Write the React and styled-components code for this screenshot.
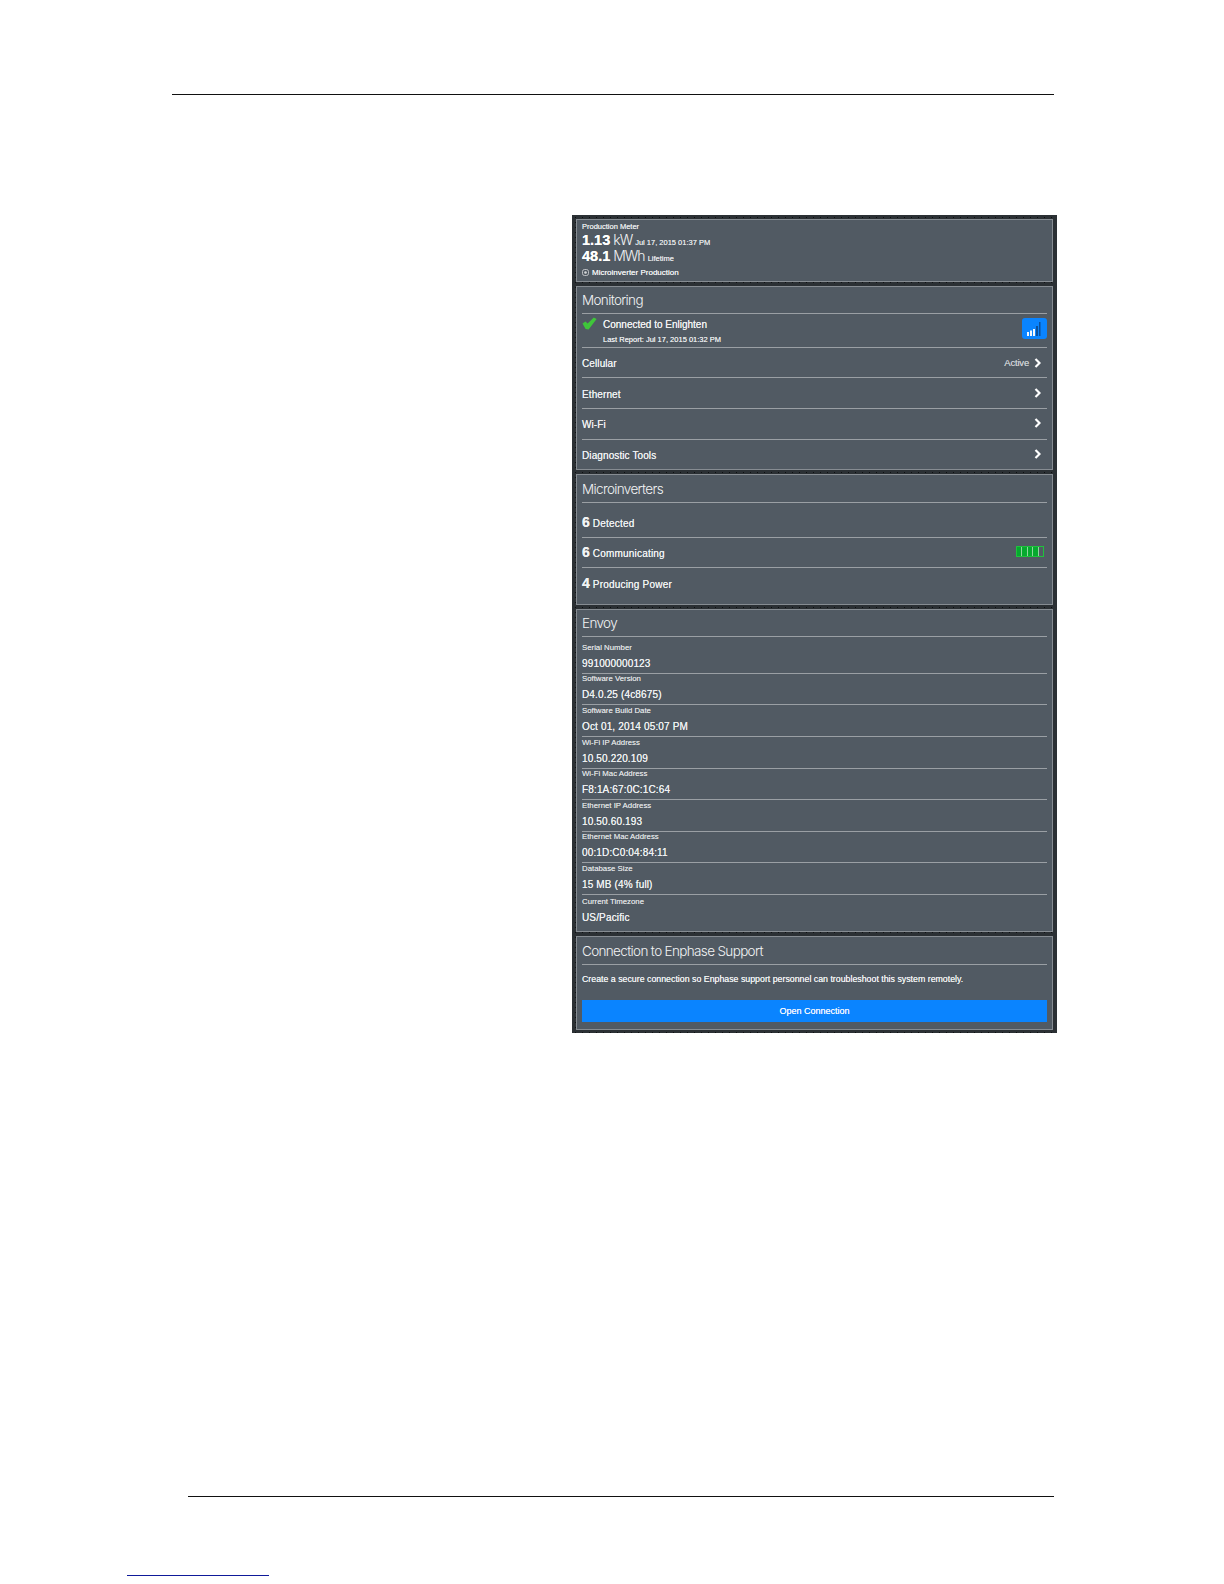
import React from 'react';
import styled, { createGlobalStyle } from 'styled-components';

const GlobalStyle = createGlobalStyle`
  html, body {
    margin: 0;
    padding: 0;
    background: #fff;
  }
  body {
    font-family: "Liberation Sans", Arial, sans-serif;
    text-shadow: 0 0 0.4px currentColor;
  }
`;

const envoyFields = [
  { label: 'Serial Number', value: '991000000123', height: 37 },
  { label: 'Software Version', value: 'D4.0.25 (4c8675)', height: 31 },
  { label: 'Software Build Date', value: 'Oct 01, 2014 05:07 PM', height: 32 },
  { label: 'Wi-Fi IP Address', value: '10.50.220.109', height: 32 },
  { label: 'Wi-Fi Mac Address', value: 'F8:1A:67:0C:1C:64', height: 31 },
  { label: 'Ethernet IP Address', value: '10.50.60.193', height: 32 },
  { label: 'Ethernet Mac Address', value: '00:1D:C0:04:84:11', height: 31 },
  { label: 'Database Size', value: '15 MB (4% full)', height: 32 },
  { label: 'Current Timezone', value: 'US/Pacific', height: 32, last: true },
];

const Chevron = () => (
  <svg width="7" height="10" viewBox="0 0 7 10">
    <path d="M1.5 1 L5.5 5 L1.5 9" fill="none" stroke="#fff" strokeWidth="2.2" />
  </svg>
);

const Home = () => (
  <Page>
    <GlobalStyle />
    <TopRule />
    <Screen>
      <Card $height={63}>
        <MeterLabel>Production Meter</MeterLabel>
        <MeterLine>
          <MeterValue>1.13</MeterValue>
          <MeterUnit>kW</MeterUnit>
          <MeterNote>Jul 17, 2015 01:37 PM</MeterNote>
        </MeterLine>
        <MeterLine>
          <MeterValue>48.1</MeterValue>
          <MeterUnit>MWh</MeterUnit>
          <MeterNote>Lifetime</MeterNote>
        </MeterLine>
        <ExpandLine>
          <svg width="7" height="7" viewBox="0 0 7 7">
            <rect x="0.5" y="0.5" width="6" height="6" rx="2" fill="none" stroke="#d5d8da" strokeWidth="0.8" />
            <circle cx="3.5" cy="3.5" r="1.3" fill="#d5d8da" />
          </svg>
          Microinverter Production
        </ExpandLine>
      </Card>

      <Card $height={184} $top={4}>
        <CardTitle $height={27}>Monitoring</CardTitle>
        <StatusRow>
          <CheckMark width="15" height="13" viewBox="0 0 15 13">
            <path d="M0.5 6.5 L3.5 4.5 L5.6 6.6 L11.8 0.5 L14.6 2 L6.6 12.5 L3.6 12 Z" fill="#3fc63a" />
          </CheckMark>
          <StatusText>
            <StatusTitle>Connected to Enlighten</StatusTitle>
            <StatusNote>Last Report: Jul 17, 2015 01:32 PM</StatusNote>
          </StatusText>
          <SignalBadge>
            <svg width="16" height="14" viewBox="0 0 16 14">
              <rect x="0" y="10" width="2" height="4" fill="#f1f7ff" />
              <rect x="3" y="8.5" width="2" height="5.5" fill="#f1f7ff" />
              <rect x="6" y="7" width="2" height="7" fill="#f1f7ff" />
              <rect x="9" y="4" width="2" height="10" fill="#0a4f9c" />
              <rect x="12" y="0" width="1.5" height="14" fill="#0a4f9c" />
            </svg>
          </SignalBadge>
        </StatusRow>
        <NavRow $height={30} $shift={1}>
          Cellular
          <NavSide>
            <ActiveText>Active</ActiveText>
            <Chevron />
          </NavSide>
        </NavRow>
        <NavRow $height={31} $shift={1}>
          Ethernet
          <NavSide><Chevron /></NavSide>
        </NavRow>
        <NavRow $height={31}>
          Wi-Fi
          <NavSide><Chevron /></NavSide>
        </NavRow>
        <NavRow $height={30} $last>
          Diagnostic Tools
          <NavSide><Chevron /></NavSide>
        </NavRow>
      </Card>

      <Card $height={131} $top={4}>
        <CardTitle $height={28}>Microinverters</CardTitle>
        <CountRow $height={35}>
          <CountValue>6</CountValue>
          <CountLabel>Detected</CountLabel>
        </CountRow>
        <CountRow $height={30}>
          <CountValue>6</CountValue>
          <CountLabel>Communicating</CountLabel>
          <Battery>
            {[true, true, true, true, false].map((on, i) => (
              <BatteryCell key={i} $on={on} />
            ))}
          </Battery>
        </CountRow>
        <CountRow $height={30} $last>
          <CountValue>4</CountValue>
          <CountLabel>Producing Power</CountLabel>
        </CountRow>
      </Card>

      <Card $height={323} $top={4}>
        <CardTitle $height={27}>Envoy</CardTitle>
        {envoyFields.map((field) => (
          <Field key={field.label} $height={field.height} $last={field.last}>
            <FieldLabel>{field.label}</FieldLabel>
            <FieldValue>{field.value}</FieldValue>
          </Field>
        ))}
      </Card>

      <Card $height={94} $top={4}>
        <CardTitle $height={28}>Connection to Enphase Support</CardTitle>
        <SupportText>Create a secure connection so Enphase support personnel can troubleshoot this system remotely.</SupportText>
        <OpenButton>Open Connection</OpenButton>
      </Card>
    </Screen>
    <BottomRule />
    <FooterLink />
  </Page>
);

export default Home;


const Page = styled.div`
  width: 1224px;
  height: 1584px;
  overflow: hidden;
  background: #fff;
  padding-top: 94px;
  box-sizing: border-box;
`;

const TopRule = styled.div`
  height: 1px;
  margin-left: 172px;
  width: 882px;
  background: #111;
`;

const BottomRule = styled.div`
  height: 1px;
  margin: 463px 0 0 188px;
  width: 866px;
  background: #111;
`;

const FooterLink = styled.div`
  height: 1px;
  margin: 78px 0 0 127px;
  width: 142px;
  background: #0f1a9a;
`;

const Screen = styled.div`
  width: 485px;
  height: 818px;
  margin: 120px 0 0 572px;
  padding: 4px;
  box-sizing: border-box;
  background-color: #2b3034;
  background-image: radial-gradient(circle, #0e1012 0.7px, transparent 1px);
  background-size: 7px 5px;
`;

const Card = styled.div`
  height: ${({ $height }) => $height}px;
  margin-top: ${({ $top }) => $top || 0}px;
  padding: 0 5px;
  box-sizing: border-box;
  background: #515a63;
  border: 1px solid #868c92;
  color: #eef0f1;
`;

const MeterLabel = styled.div`
  font-size: 7.5px;
  line-height: 10px;
  padding-top: 2px;
  color: #e6e8ea;
`;

const MeterLine = styled.div`
  display: flex;
  align-items: baseline;
  height: 16px;
  line-height: 16px;
`;

const MeterValue = styled.span`
  font-size: 14.5px;
  font-weight: 700;
  color: #fff;
`;

const MeterUnit = styled.span`
  font-family: Inter, "Liberation Sans", sans-serif;
  font-weight: 300;
  font-size: 14px;
  margin-left: 3px;
  letter-spacing: -1px;
  text-shadow: none;
  color: #f1f3f4;
`;

const MeterNote = styled.span`
  font-size: 7.5px;
  margin-left: 3px;
  color: #e3e5e7;
`;

const ExpandLine = styled.div`
  display: flex;
  align-items: center;
  gap: 3px;
  margin-top: 3px;
  font-size: 8px;
  line-height: 11px;
  color: #eef0f1;
`;

const CardTitle = styled.div`
  height: ${({ $height }) => $height - 1}px;
  line-height: ${({ $height }) => $height}px;
  border-bottom: 1px solid #9a9fa4;
  font-family: Inter, "Liberation Sans", sans-serif;
  font-weight: 300;
  font-size: 13.5px;
  letter-spacing: -0.65px;
  text-shadow: none;
  color: #f1f3f4;
`;

const StatusRow = styled.div`
  display: flex;
  align-items: flex-start;
  height: 34px;
  padding-top: 5px;
  box-sizing: border-box;
  border-bottom: 1px solid #9a9fa4;
`;

const CheckMark = styled.svg`
  margin-top: -2px;
`;

const StatusText = styled.div`
  margin-left: 6px;
  flex: 1;
`;

const StatusTitle = styled.div`
  font-size: 10px;
  line-height: 12px;
  color: #f0f1f2;
`;

const StatusNote = styled.div`
  font-size: 7.5px;
  line-height: 10px;
  margin-top: 4px;
  color: #e8eaeb;
`;

const SignalBadge = styled.div`
  display: flex;
  align-items: flex-end;
  justify-content: center;
  width: 25px;
  height: 21px;
  margin-top: -1px;
  padding-bottom: 3px;
  box-sizing: border-box;
  background: #0a84ff;
  border-radius: 3px;
`;

const NavRow = styled.div`
  display: flex;
  align-items: center;
  justify-content: space-between;
  height: ${({ $height }) => $height}px;
  padding-top: ${({ $shift }) => ($shift ? 2 : 0)}px;
  box-sizing: border-box;
  border-bottom: ${({ $last }) => ($last ? 'none' : '1px solid #9a9fa4')};
  font-size: 10px;
  letter-spacing: 0.1px;
  color: #eef0f1;
`;

const NavSide = styled.div`
  display: flex;
  align-items: center;
  gap: 5px;
  padding-right: 6px;
  margin-top: -2px;
  color: #fff;
`;

const ActiveText = styled.span`
  font-size: 9.5px;
  letter-spacing: -0.2px;
  color: #c9cdd0;
`;

const CountRow = styled.div`
  display: flex;
  align-items: flex-end;
  height: ${({ $height }) => $height}px;
  padding-bottom: 7px;
  box-sizing: border-box;
  border-bottom: ${({ $last }) => ($last ? 'none' : '1px solid #9a9fa4')};
`;

const CountValue = styled.span`
  font-size: 14px;
  font-weight: 700;
  line-height: 16px;
  color: #f2f3f4;
`;

const CountLabel = styled.span`
  font-size: 10px;
  line-height: 13px;
  margin-left: 3px;
  letter-spacing: 0.2px;
  flex: 1;
  color: #eef0f1;
`;

const Battery = styled.div`
  display: flex;
  width: 28px;
  height: 11px;
  margin: 0 3px 3px 0;
  box-sizing: border-box;
  border: 1px solid #1fc23c;
  gap: 1px;
  background: #8fd69c;
`;

const BatteryCell = styled.div`
  flex: 1;
  background: ${({ $on }) => ($on ? '#06a92f' : '#515a63')};
`;

const Field = styled.div`
  height: ${({ $height }) => $height}px;
  box-sizing: border-box;
  border-bottom: ${({ $last }) => ($last ? 'none' : '1px solid #9a9fa4')};
  display: flex;
  flex-direction: column;
  justify-content: flex-end;
`;

const FieldLabel = styled.div`
  font-size: 7.8px;
  line-height: 9px;
  color: #d9dcde;
`;

const FieldValue = styled.div`
  font-size: 10px;
  line-height: 12px;
  margin: 6px 0 3px;
  letter-spacing: 0.15px;
  color: #eef0f1;
`;

const SupportText = styled.div`
  font-size: 8.8px;
  line-height: 12px;
  margin-top: 8px;
  color: #eef0f1;
`;

const OpenButton = styled.div`
  display: flex;
  align-items: center;
  justify-content: center;
  height: 22px;
  margin-top: 15px;
  background: #0a84ff;
  font-size: 9px;
  color: #f2f7ff;
`;
